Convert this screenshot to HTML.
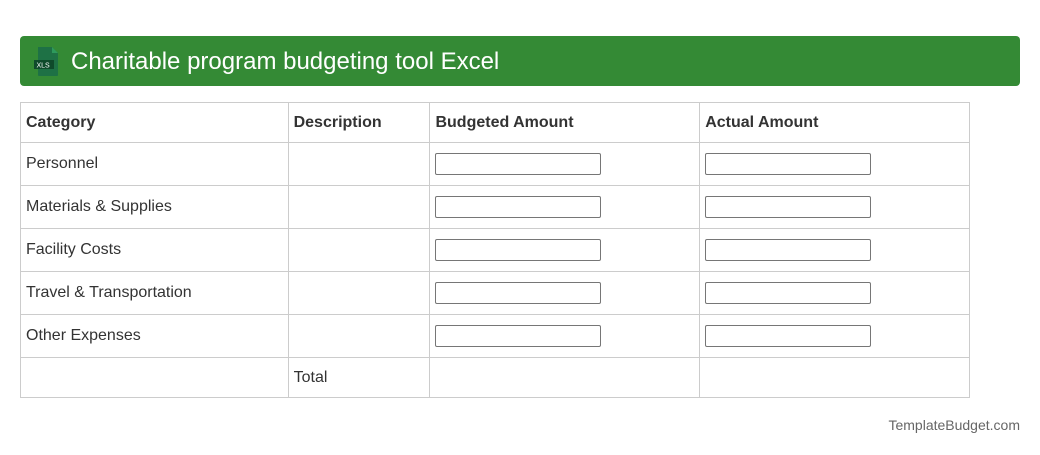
<!DOCTYPE html>
<html><head><style>
body{margin:0;background:#fff;font-family:"Liberation Sans",Roboto,sans-serif;width:1040px;height:455px;position:relative;overflow:hidden}
.hdr{position:absolute;left:20px;top:36px;width:1000px;height:50px;background:#348a35;border-radius:4px}
.hdr .t{position:absolute;left:51px;top:12px;color:#fff;font-size:24px;line-height:28px}
.ic{position:absolute;left:13px;top:10px}
table{position:absolute;left:20px;top:102px;border-collapse:collapse;width:950px;font-size:16px;color:#333}
td,th{border:1px solid #ccc;padding:0 0 0 5px;text-align:left;height:43px;box-sizing:border-box}
th{font-weight:bold;height:40px}
tr.last td{height:40px}
.in{width:166px;height:22px;box-sizing:border-box;border:1px solid #767676;border-radius:2px;display:block}
.f{position:absolute;right:20px;top:417px;font-size:14px;color:#666}
</style></head><body>
<div class="hdr">
<svg class="ic" width="26" height="31" viewBox="0 0 26 31"><path d="M5 1h14l6 6v22a1 1 0 0 1-1 1H6a1 1 0 0 1-1-1z" fill="#1e7145"/><path d="M19 1v6h6z" fill="#2e9a5c"/><rect x="1" y="14" width="20" height="9" fill="#0f4a2b"/><text x="3.5" y="21.5" font-size="7" fill="#fff" font-family="Liberation Sans">XLS</text></svg>
<div class="t">Charitable program budgeting tool Excel</div>
</div>
<table>
<colgroup><col style="width:268px"><col style="width:142px"><col style="width:270px"><col style="width:270px"></colgroup>
<tr><th>Category</th><th>Description</th><th>Budgeted Amount</th><th>Actual Amount</th></tr>
<tr><td>Personnel</td><td></td><td><span class="in"></span></td><td><span class="in"></span></td></tr>
<tr><td>Materials &amp; Supplies</td><td></td><td><span class="in"></span></td><td><span class="in"></span></td></tr>
<tr><td>Facility Costs</td><td></td><td><span class="in"></span></td><td><span class="in"></span></td></tr>
<tr><td>Travel &amp; Transportation</td><td></td><td><span class="in"></span></td><td><span class="in"></span></td></tr>
<tr><td>Other Expenses</td><td></td><td><span class="in"></span></td><td><span class="in"></span></td></tr>
<tr class="last"><td></td><td>Total</td><td></td><td></td></tr>
</table>
<div class="f">TemplateBudget.com</div>
</body></html>
